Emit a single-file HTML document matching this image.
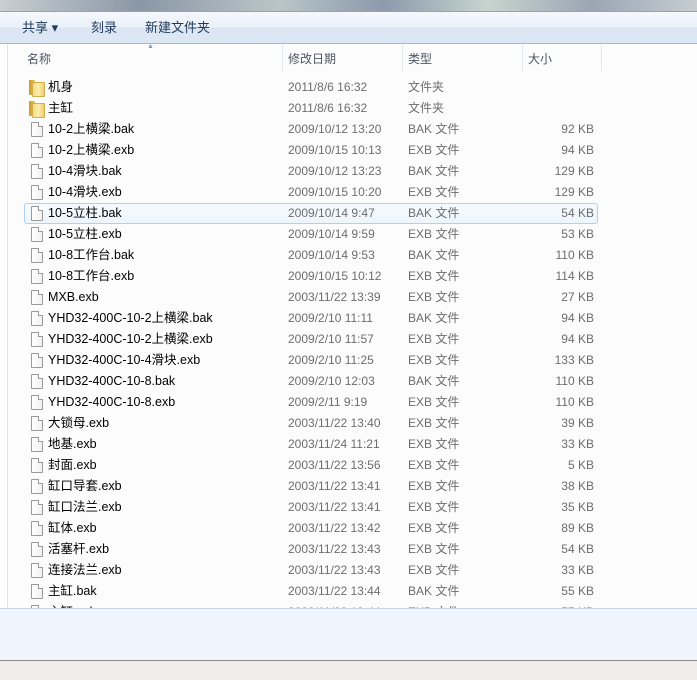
<!DOCTYPE html>
<html><head><meta charset="utf-8"><style>
*{margin:0;padding:0;box-sizing:border-box}
body{width:697px;height:680px;overflow:hidden;background:#fcfcfc;font-family:"Liberation Sans","Noto Sans CJK SC",sans-serif;font-size:12px;position:relative;color:#1e1e1e}
#top{position:absolute;left:0;top:0;width:697px;height:12px;background:linear-gradient(90deg,#c9cfd3,#8a97a6 20%,#b9c6c8 40%,#8c9aac 55%,#c6d5cf 70%,#9aa6b4 85%,#c7cdd2);border-bottom:1px solid #9aa3ad}
#tb{position:absolute;left:0;top:12px;width:697px;height:32px;background:linear-gradient(#f5f9fd,#e9f0f8 50%,#dce6f3 51%,#dce7f4);border-bottom:1px solid #a9b8cb}
#tb span{position:absolute;top:5px;font-size:13px;color:#1e395b}
#left{position:absolute;left:0;top:44px;width:8px;height:564px;border-right:1px solid #dde4ec;background:#fff}
#hdr{position:absolute;left:9px;top:44px;width:688px;height:27px}
#hdr span{position:absolute;top:6px;color:#4d5561;font-size:12px}
.sep{position:absolute;top:44px;width:1px;height:27px;background:#e3e8ef}
.row{position:absolute;left:0;width:697px;height:21px;line-height:21px}
.row .n{position:absolute;left:48px;color:#000;font-size:12.5px}
.row .d{position:absolute;left:288px;color:#6d6d6d}
.row .t{position:absolute;left:408px;color:#6d6d6d}
.row .s{position:absolute;right:103px;color:#6d6d6d}
.ic{position:absolute;left:31px;top:3px;width:12px;height:15px;border:1px solid #9a9a9a;background:linear-gradient(90deg,#fff,#f0f0f0);border-radius:1px}
.ic:after{content:"";position:absolute;right:-1px;top:-1px;width:4px;height:4px;background:#fcfcfc;border-left:1px solid #9a9a9a;border-bottom:1px solid #9a9a9a}
.fd{position:absolute;left:29px;top:3px;width:14px;height:15px}
.fd:before{content:"";position:absolute;left:0;top:0;width:6px;height:15px;background:linear-gradient(90deg,#c99a2e,#e8c458);border-radius:1px}
.fd:after{content:"";position:absolute;left:3px;top:2px;width:11px;height:13px;background:linear-gradient(90deg,#f4dc84,#fbeeb0 50%,#ecd070);border:1px solid #d2ae48;border-radius:1px}
.sel{position:absolute;left:24px;top:203px;width:574px;height:21px;border:1px solid #aed0f2;border-radius:3px;background:linear-gradient(#f7fbff,#edf5fd)}
#det{position:absolute;left:0;top:608px;width:697px;height:53px;background:#f0f4fc;border-top:1px solid #c7d4e6;border-bottom:1px solid #8c8c8c}
#sb{position:absolute;left:0;top:661px;width:697px;height:19px;background:#f0ece9}
</style></head><body>
<div id="top"></div>
<div id="tb"><span style="left:22px">共享 ▾</span><span style="left:91px">刻录</span><span style="left:145px">新建文件夹</span></div>
<div id="left"></div>
<div style="position:absolute;left:147px;top:43px;font-size:7px;color:#7a9cc6">▲</div>
<div id="hdr"><span style="left:18px">名称</span><span style="left:279px">修改日期</span><span style="left:399px">类型</span><span style="left:519px">大小</span></div>
<div class="sep" style="left:282px"></div><div class="sep" style="left:402px"></div><div class="sep" style="left:522px"></div><div class="sep" style="left:601px"></div>
<div class="sel"></div>
<div class="row" style="top:77px"><div class="fd"></div><span class="n">机身</span><span class="d">2011/8/6 16:32</span><span class="t">文件夹</span></div>
<div class="row" style="top:98px"><div class="fd"></div><span class="n">主缸</span><span class="d">2011/8/6 16:32</span><span class="t">文件夹</span></div>
<div class="row" style="top:119px"><div class="ic"></div><span class="n">10-2上横梁.bak</span><span class="d">2009/10/12 13:20</span><span class="t">BAK 文件</span><span class="s">92 KB</span></div>
<div class="row" style="top:140px"><div class="ic"></div><span class="n">10-2上横梁.exb</span><span class="d">2009/10/15 10:13</span><span class="t">EXB 文件</span><span class="s">94 KB</span></div>
<div class="row" style="top:161px"><div class="ic"></div><span class="n">10-4滑块.bak</span><span class="d">2009/10/12 13:23</span><span class="t">BAK 文件</span><span class="s">129 KB</span></div>
<div class="row" style="top:182px"><div class="ic"></div><span class="n">10-4滑块.exb</span><span class="d">2009/10/15 10:20</span><span class="t">EXB 文件</span><span class="s">129 KB</span></div>
<div class="row" style="top:203px"><div class="ic"></div><span class="n">10-5立柱.bak</span><span class="d">2009/10/14 9:47</span><span class="t">BAK 文件</span><span class="s">54 KB</span></div>
<div class="row" style="top:224px"><div class="ic"></div><span class="n">10-5立柱.exb</span><span class="d">2009/10/14 9:59</span><span class="t">EXB 文件</span><span class="s">53 KB</span></div>
<div class="row" style="top:245px"><div class="ic"></div><span class="n">10-8工作台.bak</span><span class="d">2009/10/14 9:53</span><span class="t">BAK 文件</span><span class="s">110 KB</span></div>
<div class="row" style="top:266px"><div class="ic"></div><span class="n">10-8工作台.exb</span><span class="d">2009/10/15 10:12</span><span class="t">EXB 文件</span><span class="s">114 KB</span></div>
<div class="row" style="top:287px"><div class="ic"></div><span class="n">MXB.exb</span><span class="d">2003/11/22 13:39</span><span class="t">EXB 文件</span><span class="s">27 KB</span></div>
<div class="row" style="top:308px"><div class="ic"></div><span class="n">YHD32-400C-10-2上横梁.bak</span><span class="d">2009/2/10 11:11</span><span class="t">BAK 文件</span><span class="s">94 KB</span></div>
<div class="row" style="top:329px"><div class="ic"></div><span class="n">YHD32-400C-10-2上横梁.exb</span><span class="d">2009/2/10 11:57</span><span class="t">EXB 文件</span><span class="s">94 KB</span></div>
<div class="row" style="top:350px"><div class="ic"></div><span class="n">YHD32-400C-10-4滑块.exb</span><span class="d">2009/2/10 11:25</span><span class="t">EXB 文件</span><span class="s">133 KB</span></div>
<div class="row" style="top:371px"><div class="ic"></div><span class="n">YHD32-400C-10-8.bak</span><span class="d">2009/2/10 12:03</span><span class="t">BAK 文件</span><span class="s">110 KB</span></div>
<div class="row" style="top:392px"><div class="ic"></div><span class="n">YHD32-400C-10-8.exb</span><span class="d">2009/2/11 9:19</span><span class="t">EXB 文件</span><span class="s">110 KB</span></div>
<div class="row" style="top:413px"><div class="ic"></div><span class="n">大锁母.exb</span><span class="d">2003/11/22 13:40</span><span class="t">EXB 文件</span><span class="s">39 KB</span></div>
<div class="row" style="top:434px"><div class="ic"></div><span class="n">地基.exb</span><span class="d">2003/11/24 11:21</span><span class="t">EXB 文件</span><span class="s">33 KB</span></div>
<div class="row" style="top:455px"><div class="ic"></div><span class="n">封面.exb</span><span class="d">2003/11/22 13:56</span><span class="t">EXB 文件</span><span class="s">5 KB</span></div>
<div class="row" style="top:476px"><div class="ic"></div><span class="n">缸口导套.exb</span><span class="d">2003/11/22 13:41</span><span class="t">EXB 文件</span><span class="s">38 KB</span></div>
<div class="row" style="top:497px"><div class="ic"></div><span class="n">缸口法兰.exb</span><span class="d">2003/11/22 13:41</span><span class="t">EXB 文件</span><span class="s">35 KB</span></div>
<div class="row" style="top:518px"><div class="ic"></div><span class="n">缸体.exb</span><span class="d">2003/11/22 13:42</span><span class="t">EXB 文件</span><span class="s">89 KB</span></div>
<div class="row" style="top:539px"><div class="ic"></div><span class="n">活塞杆.exb</span><span class="d">2003/11/22 13:43</span><span class="t">EXB 文件</span><span class="s">54 KB</span></div>
<div class="row" style="top:560px"><div class="ic"></div><span class="n">连接法兰.exb</span><span class="d">2003/11/22 13:43</span><span class="t">EXB 文件</span><span class="s">33 KB</span></div>
<div class="row" style="top:581px"><div class="ic"></div><span class="n">主缸.bak</span><span class="d">2003/11/22 13:44</span><span class="t">BAK 文件</span><span class="s">55 KB</span></div>
<div class="row" style="top:602px"><div class="ic"></div><span class="n">主缸.exb</span><span class="d">2003/11/22 13:44</span><span class="t">EXB 文件</span><span class="s">55 KB</span></div>
<div id="det"></div>
<div id="sb"></div>
</body></html>
